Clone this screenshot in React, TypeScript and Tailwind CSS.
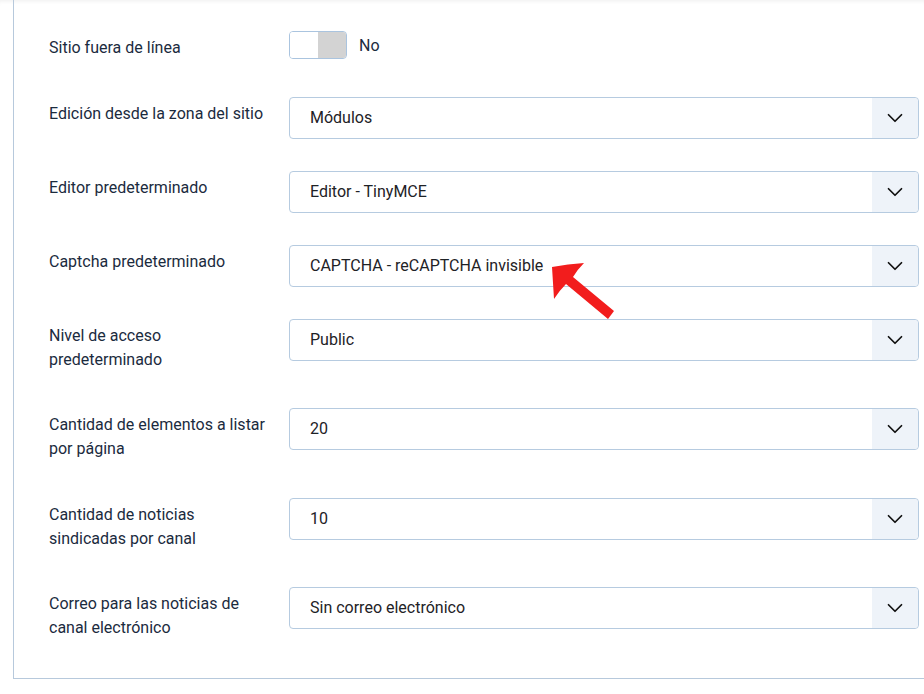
import { ChevronDown } from 'lucide-react';

type Row = { label: string[]; value: string; arrow?: boolean };

const rows: Row[] = [
  { label: ['Edición desde la zona del sitio'], value: 'Módulos' },
  { label: ['Editor predeterminado'], value: 'Editor - TinyMCE' },
  { label: ['Captcha predeterminado'], value: 'CAPTCHA - reCAPTCHA invisible', arrow: true },
  { label: ['Nivel de acceso', 'predeterminado'], value: 'Public' },
  { label: ['Cantidad de elementos a listar', 'por página'], value: '20' },
  { label: ['Cantidad de noticias', 'sindicadas por canal'], value: '10' },
  { label: ['Correo para las noticias de', 'canal electrónico'], value: 'Sin correo electrónico' },
];

function Arrow() {
  return (
    <svg
      className="absolute left-[256px] top-[10px] pointer-events-none"
      width="72"
      height="66"
      viewBox="0 0 72 66"
    >
      <path
        d="M6 11 Q22 8 38 7 Q31 14 27 21 L68 55 L62 63 L20 28 Q13 35 8 43 Q7 27 6 11 Z"
        fill="#f21d1d"
      />
    </svg>
  );
}

export default function App() {
  return (
    <div
      className="w-[924px] h-[694px] bg-white pl-[13px] overflow-hidden shadow-[inset_0_4px_4px_-3px_rgba(0,0,0,0.07)]"
      style={{ fontFamily: 'Roboto, "Liberation Sans", sans-serif' }}
    >
      <div className="border-l border-b border-[#b7c9dc] pl-[35px] pt-[31px] pb-[1px] text-[16px]">
        <div className="flex mb-[32px]">
          <div className="w-[240px] pt-[5px] pb-[5px] leading-6 text-[#1b2b3e]">Sitio fuera de línea</div>
          <div className="flex items-start gap-3">
            <div className="flex w-[58px] h-[28px] rounded border border-[#aac4df] overflow-hidden">
              <div className="flex-1 bg-white" />
              <div className="flex-1 bg-[#d3d3d3]" />
            </div>
            <span className="text-[#1b2b3e] leading-6 pt-[3px]">No</span>
          </div>
        </div>
        {rows.map((r) => (
          <div key={r.value} className="flex mb-[32px]">
            <div className="w-[240px] pt-[5px] pb-[4.4px] leading-6 text-[#1b2b3e]">
              {r.label.map((l) => (
                <div key={l}>{l}</div>
              ))}
            </div>
            <div className="relative flex-1 mr-[5px] self-start h-[42px] flex rounded border border-[#b6cbe0] bg-white">
              <div className="flex-1 flex items-center pl-[20px] text-[#1e2226]">{r.value}</div>
              <div className="w-[46px] flex items-center justify-center bg-[#eef3f9] rounded-r">
                <ChevronDown className="w-[26px] h-[26px] text-[#111]" strokeWidth={1.6} />
              </div>
              {r.arrow && <Arrow />}
            </div>
          </div>
        ))}
      </div>
    </div>
  );
}
